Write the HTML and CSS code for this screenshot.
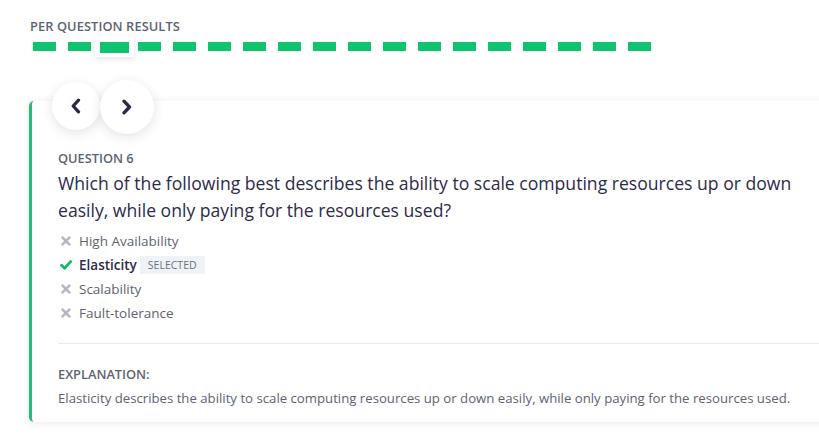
FILE: index.html
```html
<!DOCTYPE html>
<html>
<head>
<meta charset="utf-8">
<link rel="stylesheet" href="styles.css">
</head>
<body>
<div class="page">
  <div class="results">
    <div class="results-title">PER QUESTION RESULTS</div>
    <div class="dashes">
      <span class="dash"></span><span class="dash"></span><span class="dash active"></span><span class="dash"></span><span class="dash"></span><span class="dash"></span><span class="dash"></span><span class="dash"></span><span class="dash"></span><span class="dash"></span><span class="dash"></span><span class="dash"></span><span class="dash"></span><span class="dash"></span><span class="dash"></span><span class="dash"></span><span class="dash"></span><span class="dash"></span>
    </div>
  </div>
  <div class="card">
    <div class="nav">
      <button class="nav-btn prev"><svg width="12" height="16" viewBox="0 0 12 16"><path d="M8.5 2.2 L3.2 8 L8.5 13.8" fill="none" stroke="#2b2946" stroke-width="3.3" stroke-linecap="round" stroke-linejoin="round"/></svg></button>
      <button class="nav-btn next"><svg width="14" height="16" viewBox="0 0 14 16"><path d="M4 2.2 L9.5 8 L4 13.8" fill="none" stroke="#2b2946" stroke-width="3.3" stroke-linecap="round" stroke-linejoin="round"/></svg></button>
    </div>
    <div class="q-label">QUESTION 6</div>
    <div class="q-text">Which of the following best describes the ability to scale computing resources up or down easily, while only paying for the resources used?</div>
    <ul class="options">
      <li class="opt"><span class="ico"><svg width="10" height="10" viewBox="0 0 10 10"><path d="M1.6 1.6 L8.4 8.4 M8.4 1.6 L1.6 8.4" stroke="#b5b9c2" stroke-width="2.7" stroke-linecap="round"/></svg></span>High Availability</li>
      <li class="opt correct"><span class="ico"><svg width="12" height="10" viewBox="0 0 12 10"><path d="M1.5 5.2 L4.6 8.2 L10.6 1.6" fill="none" stroke="#14b86b" stroke-width="2.8" stroke-linecap="round" stroke-linejoin="round"/></svg></span><span class="opt-name">Elasticity</span><span class="badge">SELECTED</span></li>
      <li class="opt"><span class="ico"><svg width="10" height="10" viewBox="0 0 10 10"><path d="M1.6 1.6 L8.4 8.4 M8.4 1.6 L1.6 8.4" stroke="#b5b9c2" stroke-width="2.7" stroke-linecap="round"/></svg></span>Scalability</li>
      <li class="opt"><span class="ico"><svg width="10" height="10" viewBox="0 0 10 10"><path d="M1.6 1.6 L8.4 8.4 M8.4 1.6 L1.6 8.4" stroke="#b5b9c2" stroke-width="2.7" stroke-linecap="round"/></svg></span>Fault-tolerance</li>
    </ul>
    <div class="sep"></div>
    <div class="exp-label">EXPLANATION:</div>
    <div class="exp-text">Elasticity describes the ability to scale computing resources up or down easily, while only paying for the resources used.</div>
  </div>
</div>
</body>
</html>
```

FILE: styles.css
```css
* { box-sizing: border-box; }
html, body { margin: 0; padding: 0; background: #ffffff; }
body {
  font-family: "Open Sans", "Noto Sans", sans-serif;
  color: #2d2b4a;
  width: 819px;
  height: 435px;
  overflow: hidden;
}
.page { padding: 17px 0 0 0; }
.results { padding-left: 30px; }
.results-title {
  font-size: 12.8px;
  font-weight: 600;
  color: #5d6371;
  letter-spacing: 0.1px;
  line-height: 18px;
}
.dashes {
  display: flex;
  align-items: center;
  margin-left: -3px;
  margin-top: 7px;
  height: 9px;
}
.dash {
  width: 35px;
  height: 9px;
  display: flex;
  justify-content: center;
  align-items: center;
  position: relative;
}
.dash::before {
  content: "";
  width: 23px;
  height: 9px;
  flex: none;
  background: #10c46f;
}
.dash.active::after {
  content: "";
  position: absolute;
  left: -2px;
  top: -6px;
  width: 39px;
  height: 21px;
  background: #fff;
  box-shadow: 0 2px 6px rgba(40, 40, 70, 0.12);
  z-index: 0;
}
.dash.active::before {
  width: 29px;
  height: 11px;
  position: relative;
  top: 1px;
  z-index: 1;
}
.card {
  position: relative;
  margin-top: 50px;
  margin-left: 29px;
  width: 820px;
  height: 321px;
  background: #fff;
  border-left: 3px solid #1ec078;
  border-radius: 5px 0 0 5px;
  box-shadow: 0 1px 8px rgba(40, 40, 80, 0.10);
  padding: 48px 0 0 26px;
}
.nav {
  position: absolute;
  left: 20px;
  top: -22px;
  display: flex;
  align-items: center;
}
.nav-btn {
  border: none;
  background: #fff;
  border-radius: 50%;
  display: flex;
  align-items: center;
  justify-content: center;
  padding: 0;
  box-shadow: 0 3px 12px rgba(40, 40, 80, 0.13);
}
.nav-btn.prev { width: 48px; height: 48px; }
.nav-btn.next { width: 54px; height: 54px; position: relative; top: 1px; }
.q-label {
  font-size: 12.8px;
  font-weight: 600;
  color: #5d6371;
  line-height: 18px;
}
.q-text {
  font-size: 17.6px;
  font-weight: 500;
  color: #2d2b4a;
  line-height: 27px;
  margin-top: 3px;
  width: 750px;
}
.options {
  list-style: none;
  margin: 5px 0 0 0;
  padding: 0 0 0 3px;
}
.opt {
  display: flex;
  align-items: center;
  height: 24px;
  font-size: 13.5px;
  color: #5d6371;
}
.ico {
  width: 18px;
  display: flex;
  align-items: center;
  justify-content: flex-start;
}
.opt.correct .ico { margin-left: -1px; width: 19px; }
.opt.correct .opt-name { font-weight: 600; color: #2d2b4a; }
.badge {
  margin-left: 3px;
  background: #eff2f6;
  color: #6b7180;
  font-size: 10.5px;
  padding: 0 8px;
  height: 18px;
  line-height: 18px;
}
.sep {
  margin-top: 18px;
  height: 1px;
  background: #e8e9ed;
  width: 780px;
}
.exp-label {
  margin-top: 21px;
  font-size: 12.8px;
  font-weight: 600;
  color: #5d6371;
  line-height: 18px;
}
.exp-text {
  margin-top: 6px;
  font-size: 13.2px;
  color: #5d6371;
  line-height: 18px;
}
```
